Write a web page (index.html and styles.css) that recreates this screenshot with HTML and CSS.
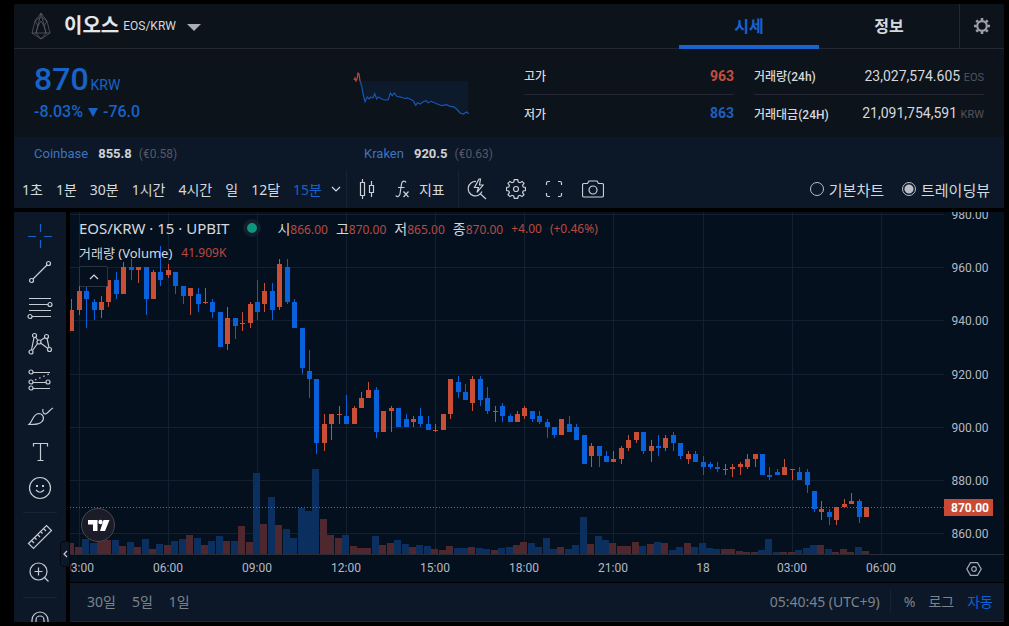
FILE: index.html
```html
<!DOCTYPE html>
<html lang="ko">
<head>
<meta charset="utf-8">
<meta name="viewport" content="width=device-width, initial-scale=1">
<title>이오스 EOS/KRW</title>
<link rel="stylesheet" href="styles.css">
</head>
<body>
<main class="app">
  <header class="header">
    <button class="coin" type="button">
      <svg class="coin-logo" width="20" height="28" viewBox="0 0 20 28"><path d="M10 1 4 9 1 21 10 27 19 21 16 9ZM10 1 5 21 10 27 15 21ZM4 9 10 5 16 9M1 21H19M4 9 7 14 5 21M16 9 13 14 15 21M7 14 10 9 13 14"/></svg>
      <strong class="coin-name">이오스</strong>
      <span class="coin-pair">EOS/KRW</span>
      <span class="caret"></span>
    </button>
    <nav class="tabs">
      <a class="tab tab-active" href="#price">시세</a>
      <a class="tab" href="#info">정보</a>
    </nav>
    <button class="header-settings" type="button" aria-label="설정">
      <svg width="18" height="18" viewBox="0 0 18 18"><circle cx="9" cy="9" r="4.8" fill="none" stroke="currentColor" stroke-width="2.2"/><path d="M9 1V3.5M9 14.500V17M1 9H3.500M14.500 9H17M3.300 3.300 5 5M13 13 14.700 14.700M14.700 3.300 13 5M5 13 3.300 14.700" stroke="currentColor" stroke-width="2.6"/></svg>
    </button>
  </header>

  <section class="summary">
    <div class="price">
      <div class="price-now"><strong>870</strong><span>KRW</span></div>
      <div class="price-change"><span>-8.03%</span><i class="down"></i><span>-76.0</span></div>
    </div>
    <svg class="spark" width="120" height="48" viewBox="0 0 120 48">
      <path class="spark-fill" d="M8 11 10 16 11 25 13 32 15 27 17 29 19 27 21 28 23 24 25 29 26 27 30 29 36 30 38 23 40 26 42 23 45 26 50 27 53 29 58 29 61 31 64 35 66 33 68 34 74 31 79 31 90 36 95 35 101 37 108 43 116 43V11Z"/>
      <path class="spark-up" d="M2 10 3 8 4 11 5 9 6 3 7 4 8 11"/>
      <path class="spark-down" d="M8 11 9.700 16 11.300 25 13 31.700 15.300 27 17.300 29 18.700 27 21 28 22.700 23.700 24.700 29 26.300 27 29.700 29 33 30 36.300 29.700 38.300 23 40.300 25.700 42.300 23 44.700 26.300 49.700 27.300 53 28.700 55 28 58 29 61.300 31 63.700 35.300 65.700 32.700 68 34 71.300 31.700 74 30.700 76.300 32.700 79 31.300 84.700 33.700 89.700 35.700 94.700 34.700 98.700 36.700 101.300 36.700 104.700 39 108 43 111.300 44 114.700 42 116.700 43.700"/>
    </svg>
    <dl class="stats stats-range">
      <div><dt>고가</dt><dd class="up">963</dd></div>
      <div><dt>저가</dt><dd class="fall">863</dd></div>
    </dl>
    <dl class="stats stats-volume">
      <div><dt>거래량(24h)</dt><dd>23,027,574.605 <small>EOS</small></dd></div>
      <div><dt>거래대금(24H)</dt><dd>21,091,754,591 <small>KRW</small></dd></div>
    </dl>
  </section>

  <section class="exchanges">
    <p><a href="#coinbase">Coinbase</a><strong>855.8</strong><span>(€0.58)</span></p>
    <p><a href="#kraken">Kraken</a><strong>920.5</strong><span>(€0.63)</span></p>
  </section>

  <section class="toolbar">
    <div class="intervals">
      <button type="button">1초</button>
      <button type="button">1분</button>
      <button type="button">30분</button>
      <button type="button">1시간</button>
      <button type="button">4시간</button>
      <button type="button">일</button>
      <button type="button">12달</button>
      <button type="button" class="on">15분</button>
    </div>
    <button type="button" class="more" aria-label="더 보기"><svg class="line" width="10" height="6" viewBox="0 0 10 6"><path d="M1 1 5 5 9 1"/></svg></button>
    <div class="tools tools-style">
      <button type="button" aria-label="캔들"><svg class="line" width="16" height="20" viewBox="0 0 16 20"><path d="M1.500 3.500H5.500V16.500H1.500ZM3.500 0V3.500M3.500 16.500V20M10.500 6.500H14.500V13.500H10.500ZM12.500 2V6.500M12.500 13.500V18"/></svg></button>
      <button type="button"><svg class="line" width="15" height="18" viewBox="0 0 15 18"><path d="M11 2.500C10 .5 7 .5 6.500 4L5 14C4.600 16.500 2 17.500 .8 15.500M3 7.500H9.500M8.500 11.500 13.500 17M13.500 11.500 8.500 17"/></svg>지표</button>
    </div>
    <div class="tools tools-view">
      <button type="button" aria-label="빠른 검색"><svg class="line" width="20" height="22" viewBox="0 0 20 22"><path d="M9 3.500A7.200 7.200 0 1 0 15 13.500M13 15.500 19 21M12 1 7.500 9.500H11.500L10 14.500 16 7H12.500L13.500 1Z"/></svg></button>
      <button type="button" aria-label="차트 설정"><svg class="line" width="20" height="20" viewBox="0 0 20 20"><circle cx="10" cy="10" r="2.500"/><path d="M8.300.6H11.700L12.300 3 14 3.700 16.100 2.400 18 4.300 16.600 6.300 17.200 8 19.500 8.500V11.500L17.200 12 16.600 13.700 18 15.700 16.100 17.600 14 16.300 12.300 17 11.700 19.400H8.300L7.700 17 6 16.300 3.900 17.600 2 15.700 3.400 13.700 2.800 12 .5 11.500V8.500L2.800 8 3.400 6.300 2 4.300 3.900 2.400 6 3.700 7.700 3Z"/></svg></button>
      <button type="button" aria-label="전체 화면"><svg class="line" width="18" height="18" viewBox="0 0 18 18"><path d="M1.500 5V3Q1.500 1.500 3 1.500H5M13 1.500H15Q16.500 1.500 16.500 3V5M16.500 13V15Q16.500 16.500 15 16.500H13M5 16.500H3Q1.500 16.500 1.500 15V13"/></svg></button>
      <button type="button" aria-label="스냅숏"><svg class="line" width="22" height="18" viewBox="0 0 22 18"><path d="M7 1H15L16.500 3.500H20Q21.500 3.500 21.500 5V15.500Q21.500 17 20 17H2Q.5 17 .5 15.500V5Q.5 3.500 2 3.500H5.500Z"/><circle cx="11" cy="10" r="4"/></svg></button>
    </div>
    <div class="chart-kind">
      <label><input type="radio" name="kind">기본차트</label>
      <label><input type="radio" name="kind" checked>트레이딩뷰</label>
    </div>
  </section>

  <section class="workspace">
    <aside class="rail">
      <button type="button" class="on" aria-label="십자선"><svg class="line" width="28" height="28" viewBox="0 0 28 28"><path d="M14.500 2V10M14.500 18V26M2 14.500H10M18 14.500H26"/></svg></button>
      <button type="button" aria-label="추세선"><svg class="line" width="28" height="28" viewBox="0 0 28 28"><circle cx="5.500" cy="22.500" r="2"/><circle cx="22.500" cy="5.500" r="2"/><path d="M7 21 21 7"/></svg></button>
      <button type="button" aria-label="피보나치"><svg class="line" width="28" height="28" viewBox="0 0 28 28"><path d="M3 4.500H25M3 10.500H22M3 16.500H25M6 22.500H25"/><circle cx="24" cy="10.500" r="2"/><circle cx="4" cy="22.500" r="2"/></svg></button>
      <button type="button" aria-label="패턴"><svg class="line" width="28" height="28" viewBox="0 0 28 28"><circle cx="8.500" cy="5.500" r="2"/><circle cx="20.500" cy="6.500" r="2"/><circle cx="5" cy="22" r="2"/><circle cx="23.500" cy="19.500" r="2"/><circle cx="13" cy="12" r="2"/><path d="M8 7.500 5.500 20M9.500 7 12 10.500M14.500 10.500 19 7.500M21 8.500 23 17.500M11.500 13.500 6.500 20.500M14.500 13 22 18.500"/></svg></button>
      <button type="button" aria-label="예측"><svg class="line" width="28" height="28" viewBox="0 0 28 28"><circle cx="5" cy="6" r="2"/><circle cx="5" cy="16" r="2"/><circle cx="5" cy="22" r="2"/><circle cx="22" cy="16" r="2"/><path d="M7 6.500H24M7 16.500H20M7 22.500H24"/><path d="M9 14 23 8" stroke-dasharray="1.500 3"/></svg></button>
      <button type="button" aria-label="브러시"><svg class="line" width="28" height="28" viewBox="0 0 28 28"><path d="M3 22.500C7 19 7 12 12.500 11.500C17 11.500 19 16 16 19.500C14 22.500 9 22.500 3 22.500ZM17 7C16 10 18 13 20.500 11.500C23 10 24 7.500 27 6"/></svg></button>
      <button type="button" aria-label="텍스트"><svg class="line" width="28" height="28" viewBox="0 0 28 28"><path d="M7.500 8.500V5.500H21.500V8.500M14.500 5.500V22.500M11.500 22.500H17.500"/></svg></button>
      <button type="button" aria-label="아이콘"><svg class="line" width="28" height="28" viewBox="0 0 28 28"><circle cx="14" cy="14" r="10.500"/><path d="M10 16Q14 20.500 18 16"/><path d="M11 11V13M17 11V13" stroke-width="2"/></svg></button>
      <hr>
      <button type="button" aria-label="측정"><svg class="line" width="28" height="28" viewBox="0 0 28 28"><path d="M2.500 20.500 20.500 2.500 25.500 7.500 7.500 25.500ZM5.500 17.500 8 20M8.500 14.500 10.500 16.500M11.500 11.500 14 14M14.500 8.500 16.500 10.500M17.500 5.500 20 8"/></svg></button>
      <button type="button" aria-label="확대"><svg class="line" width="28" height="28" viewBox="0 0 28 28"><circle cx="12.500" cy="12.500" r="8.500"/><path d="M18.500 18.500 22.500 22.500M8.500 12.500H16.500M12.500 8.500V16.500"/></svg></button>
      <hr>
      <button type="button" aria-label="자석"><svg class="line" width="28" height="28" viewBox="0 0 28 28"><path d="M6 19V12A8 8 0 0 1 22 12V19H18V12A4 4 0 0 0 10 12V19Z"/></svg></button>
      <button type="button" class="collapse" aria-label="도구 접기"><svg class="line" width="5" height="8" viewBox="0 0 5 8"><path d="M4 1 1 4 4 7"/></svg></button>
    </aside>

    <div class="chart">
      <div class="plot">
        <svg id="plot" class="canvas"></svg>
        <div class="legend">
          <div class="legend-row">
            <span class="symbol">EOS/KRW · 15 · UPBIT</span>
            <span class="status"></span>
            <div class="ohlc">
              <span>시<b>866.00</b></span>
              <span>고<b>870.00</b></span>
              <span>저<b>865.00</b></span>
              <span>종<b>870.00</b></span>
              <b>+4.00</b>
              <b>(+0.46%)</b>
            </div>
          </div>
          <div class="legend-row legend-volume"><span>거래량 (Volume)</span><b>41.909K</b></div>
          <button type="button" aria-label="범례 접기"><svg class="line" width="10" height="6" viewBox="0 0 10 6"><path d="M1 5 5 1 9 5"/></svg></button>
        </div>
        <svg class="tv" width="36" height="36" viewBox="0 0 36 36"><circle cx="18" cy="18" r="16.500" fill="#1b1c28" stroke="#454752"/><path d="M8 13H17.500V24H13V17.500H8ZM23.500 13H29.500L25 24H20Z" fill="#fff"/><circle cx="20.500" cy="15" r="2.200" fill="#fff"/></svg>
      </div>
      <div class="price-axis"><svg id="prices" class="canvas"></svg></div>
      <div class="time-axis"><svg id="times" class="canvas"></svg></div>
      <button class="axis-settings" type="button" aria-label="축 설정"><svg class="line" width="16" height="14" viewBox="0 0 16 14"><path d="M4.500.7H11.500L15.200 7 11.500 13.300H4.500L.8 7Z"/><circle cx="8" cy="7" r="2.300"/></svg></button>
      <footer class="footer">
        <div class="ranges">
          <button type="button">30일</button>
          <button type="button">5일</button>
          <button type="button">1일</button>
        </div>
        <div class="scale">
          <button type="button" class="clock">05:40:45 (UTC+9)</button>
          <button type="button">%</button>
          <button type="button">로그</button>
          <button type="button" class="on">자동</button>
        </div>
      </footer>
    </div>
  </section>
</main>
<script src="chart.js"></script>
</body>
</html>
```
FILE: styles.css
```css
* { box-sizing: border-box; }

body {
  margin: 0;
  height: 100vh;
  min-height: 600px;
  padding: 4px 5px 4px 14px;
  background: #000;
  color: #d5d8dd;
  font-family: Roboto, "Noto Sans CJK KR", sans-serif;
  overflow: hidden;
}

button {
  display: flex;
  align-items: center;
  justify-content: center;
  margin: 0;
  padding: 0;
  border: 0;
  background: none;
  color: inherit;
  font: inherit;
  white-space: nowrap;
}

a { color: inherit; text-decoration: none; }
p, dl, dd { margin: 0; }
svg { display: block; flex: none; }
.line { fill: none; stroke: currentColor; stroke-width: 1.2; }

.app { display: flex; flex-direction: column; height: 100%; }

/* Header */
.header {
  display: flex;
  height: 45px;
  flex: none;
  background: #0d131a;
  border-bottom: 1px solid #242733;
  border-radius: 2px 2px 0 0;
}
.coin { padding-left: 17px; margin-right: auto; }
.coin-logo { fill: none; stroke: #62636b; stroke-width: 0.7; margin-right: 13px; }
.coin-name { font-size: 20px; line-height: 28px; color: #e4e6e9; }
.coin-pair { font-size: 12px; margin-left: 4px; }
.caret { margin: 2px 0 0 11px; border: 7px solid transparent; border-top-color: #a9adb5; border-bottom: 0; }
.tabs { display: flex; }
.tab {
  width: 140px;
  height: 45px;
  font-size: 16px;
  font-weight: 700;
  line-height: 45px;
  text-align: center;
}
.tab-active { color: #1763d0; border-bottom: 4px solid #1763d0; }
.header-settings { width: 45px; border-left: 1px solid #242733; color: #9da1aa; }

/* Price summary */
.summary {
  display: flex;
  flex: none;
  height: 88px;
  padding: 8px 20px 0;
  background: #0d131a;
}
.price { flex: 1; padding-top: 6px; color: #1763c8; }
.price-now { display: flex; align-items: baseline; gap: 2px; font-size: 14px; line-height: 32px; }
.price-now strong { font-size: 32px; font-weight: 500; }
.price-change { display: flex; align-items: center; gap: 5px; font-size: 16px; font-weight: 500; line-height: 22px; }
.down { border: 5px solid transparent; border-top: 9px solid #1763c8; border-bottom: 0; }
.spark { margin: 13px 52px 0 0; fill: none; stroke-width: 1.2; }
.spark-fill { fill: #0c1a2c; }
.spark-up { stroke: #c0483c; }
.spark-down { stroke: #1656b4; }
.stats { font-size: 14px; }
.stats-range { width: 210px; margin-right: 20px; }
.stats-volume { width: 230px; }
.stats div { display: flex; justify-content: space-between; align-items: center; height: 37px; }
.stats div + div { border-top: 1px solid #242733; }
.stats dt { font-size: 12px; font-weight: 500; }
.stats small { font-size: 11px; color: #50545e; }
.up, .fall { font-weight: 700; }
.up { color: #c0503f; }
.fall { color: #1c5fbe; }

/* Other exchanges */
.exchanges {
  display: grid;
  grid-template-columns: 330px 1fr;
  flex: none;
  height: 31px;
  padding-left: 20px;
  background: #0c1727;
  font-size: 13px;
  line-height: 33px;
}
.exchanges a { color: #3d74bf; }
.exchanges strong { margin: 0 7px 0 10px; color: #cfd2d7; }
.exchanges span { font-size: 12px; color: #545a65; }

/* Chart toolbar */
.toolbar, .rail, .footer { font-family: "Noto Sans", "Noto Sans CJK KR", sans-serif; background: #0c1828; }
.toolbar {
  display: flex;
  flex: none;
  height: 40px;
  padding-top: 2px;
  font-size: 14px;
}
.on { color: #1763c8; }
.intervals { display: flex; gap: 13px; padding-left: 8px; }
.more { padding: 0 5px 0 9px; }
.tools { display: flex; border-left: 1px solid #172233; }
.tools svg { color: #cbd0d7; }
.tools-style { gap: 20px; width: 112px; padding-left: 12px; }
.tools-style button { gap: 9px; }
.tools-view { gap: 19px; padding-left: 8px; }
.chart-kind { display: flex; gap: 18px; margin-left: auto; padding-right: 14px; font-size: 15px; }
.chart-kind label { display: flex; align-items: center; gap: 5px; white-space: nowrap; }
.chart-kind input {
  appearance: none;
  width: 14px;
  height: 14px;
  margin: 0;
  border: 1px solid #b9bec7;
  border-radius: 50%;
}
.chart-kind input:checked { background: radial-gradient(#b9bec7 0 4px, transparent 5px); }

/* Workspace */
.workspace { display: flex; flex: 1; min-height: 0; margin-top: 4px; gap: 4px; }
.rail { position: relative; width: 52px; padding-top: 6px; color: #c5cbd3; }
.rail { display: flex; flex-direction: column; min-height: 0; clip-path: inset(0 -6px 0 0); }
.rail button { flex: none; height: 36px; }
.rail button.on { color: #1763c8; }
.rail hr { flex: none; width: 34px; margin: 6px auto; border: 0; border-top: 1px solid #182434; }
.rail .collapse {
  position: absolute;
  right: -4px;
  bottom: 55px;
  width: 10px;
  height: 26px;
  background: #0c1828;
  border: 1px solid #03080f;
  border-radius: 4px 0 0 4px;
}

.chart {
  display: grid;
  grid-template: minmax(0, 1fr) 28px 40px / minmax(0, 1fr) 60px;
  flex: 1;
  min-width: 0;
  background: #05101f;
}
.canvas { width: 100%; height: 100%; }
.canvas text { font: 12px Roboto, sans-serif; fill: #b4b9c1; text-anchor: middle; }
.canvas .grid { stroke: #14202f; }
.canvas .last { stroke: #a35648; stroke-dasharray: 1 2; }
.canvas .rise { fill: #c84f36; }
.canvas .drop { fill: #0962dc; }
.canvas .vol-rise { fill: #4f272e; }
.canvas .vol-drop { fill: #0b2f5e; }
.canvas .tag { fill: #c84a34; }
.canvas .tag-text { fill: #fff; font-weight: 700; }
.plot { position: relative; min-width: 0; overflow: hidden; }
.price-axis { overflow: hidden; }
.time-axis, .axis-settings { border-top: 1px solid #262d37; }
.time-axis { overflow: hidden; }
.axis-settings { color: #a5abb4; }

.legend {
  position: absolute;
  top: 4px;
  left: 9px;
  font-family: "Noto Sans", "Noto Sans CJK KR", sans-serif;
  font-size: 14px;
}
.legend-row { display: flex; align-items: center; height: 24px; white-space: nowrap; }
.legend b { font-size: 12px; font-weight: 400; color: #b84a40; }
.symbol { font-size: 15px; }
.status { width: 18px; height: 18px; margin: 0 16px 0 14px; border: 4px solid #101e2d; border-radius: 50%; background: #0d957e; }
.ohlc { display: flex; align-items: center; gap: 8px; }
.legend-volume { gap: 9px; font-size: 13px; }
.legend button { width: 29px; height: 21px; margin-top: 2px; border: 1px solid #2b3340; border-radius: 2px; background: #05101f; }
.tv { position: absolute; left: 10px; bottom: 11px; }

.footer {
  display: flex;
  justify-content: space-between;
  grid-column: 1 / -1;
  padding: 0 11px 2px 17px;
  border-top: 1px solid #000;
  border-bottom: 1px solid #20242b;
  font-size: 14px;
  color: #7c838e;
}
.ranges { display: flex; gap: 16px; }
.scale { display: flex; align-items: center; gap: 13px; }
.scale .clock { height: 22px; padding-right: 10px; border-right: 1px solid #172233; }
.footer .on { color: #0b62dc; }
```
FILE: chart.js
```js
// Each candle: direction, high, body top, body bottom, low, volume bar height.
const candles = `
r 948 944 936 936 11|r 953 951 944 942 7|b 953 951 948 937 15|b 948 947 944 940 11|r 949 947 944 941 13|r 955 955 947 945 14
b 958 955 950 948 14|r 962 960 950 950 8|b 963 960 959 955 12|r 960 960 959 954 7|b 960 960 948 942 15|r 959 958 948 948 5
b 968 958 955 953 10|r 961 959 957 956 9|b 958 958 953 950 13|b 953 953 949 946 15|r 952 952 949 942 19|b 952 950 946 943 16
r 952 947 947 946 9|b 948 947 943 941 13|b 943 943 930 930 18|r 945 941 931 929 13|b 941 941 938 933 13|r 943 939 939 936 28
r 947 946 939 937 12|b 955 947 943 940 81|r 954 951 946 943 30|b 954 951 944 940 57|r 963 961 945 944 29|b 963 960 947 946 25
b 948 947 937 937 16|b 937 937 922 920 46|b 929 921 918 911 43|b 918 918 894 890 85|r 905 901 894 891 35|r 905 905 901 895 19
r 908 905 905 901 16|b 912 904 901 901 19|r 908 907 901 901 8|r 913 911 907 907 6|r 917 914 911 911 6|b 915 914 898 896 18
r 906 906 898 898 9|r 908 907 906 898 11|b 907 907 900 900 14|b 905 903 900 900 10|r 904 903 902 900 7|b 907 904 901 900 9
b 904 901 899 899 8|r 901 899 899 898 5|r 905 905 899 899 4|r 918 918 905 903 8|b 919 917 913 911 6|b 916 913 910 910 6
r 919 918 909 906 7|b 919 918 910 908 6|b 915 911 906 905 5|r 908 906 906 902 4|b 909 908 904 902 6|b 905 904 902 902 7
r 906 905 902 902 9|r 908 907 904 903 12|b 906 906 903 902 11|b 906 904 902 901 7|b 903 902 900 896 16|b 900 900 897 896 5
r 903 903 897 897 7|b 904 901 898 898 5|b 901 900 895 895 9|b 897 897 886 886 37|r 894 893 889 885 10|b 893 893 889 885 18
b 891 889 887 887 14|r 891 888 887 887 11|r 893 892 888 886 8|r 897 895 892 891 8|r 898 898 895 894 12|b 898 898 891 890 8
r 895 893 891 887 10|b 897 893 892 889 12|r 897 896 892 891 11|b 898 897 894 891 4|b 894 894 889 888 7|r 891 890 888 886 11
b 891 890 887 887 7|b 889 887 885 882 11|b 887 886 885 884 6|b 887 885 884 883 5|r 886 884 884 882 5|r 886 885 884 881 5
r 887 886 885 882 3|r 890 888 885 884 2|r 890 890 888 885 2|b 890 890 882 882 4|b 885 882 881 880 15|b 884 883 882 882 2
r 888 885 882 882 2|r 884 884 884 880 2|b 885 883 880 880 4|b 884 883 878 875 6|b 876 876 869 868 9|r 872 869 868 865 9
b 869 868 866 863 5|r 870 870 865 863 2|r 873 871 870 870 5|r 875 872 871 871 2|b 873 872 866 864 7|r 870 870 866 866 3`
  .trim().split(/[|\n]/).map(row => row.split(" "));

const labels = ["03:00", "06:00", "09:00", "12:00", "15:00", "18:00", "21:00", "18", "03:00", "06:00"];
const plot = document.getElementById("plot");
const prices = document.getElementById("prices");
const times = document.getElementById("times");

function rect(cls, x, y, w, h) {
  return `<rect class="${cls}" x="${x}" y="${y}" width="${w}" height="${h}"/>`;
}

function draw() {
  const width = plot.clientWidth;
  const height = plot.clientHeight;
  const step = 7.427;
  const x = i => Math.round(width - 78 - (106 - i) * step);
  const y = p => Math.round((980.6 - p) * height / 128.3);
  let grid = "", volume = "", bodies = "", priceText = "", timeText = "";

  for (let p = 980; p >= 860; p -= 20) {
    grid += `<path class="grid" d="M0 ${y(p) + 0.5}H${width}"/>`;
    priceText += `<text x="26" y="${y(p) + 5}">${p}.00</text>`;
  }
  labels.forEach((label, n) => {
    grid += `<path class="grid" d="M${x(n * 12) + 0.5} 0V${height}"/>`;
    timeText += `<text x="${x(n * 12)}" y="17">${label}</text>`;
  });
  candles.forEach(([side, high, top, bottom, low, vol], n) => {
    const cx = x(n - 1);
    const cls = side === "r" ? "rise" : "drop";
    volume += rect("vol-" + cls, cx - 4, height - vol, 7, vol);
    bodies += rect(cls, cx, y(high), 1, Math.max(1, y(low) - y(high)));
    bodies += rect(cls, cx - 2, y(top), 5, Math.max(1, y(bottom) - y(top)));
  });
  const last = y(870);
  plot.innerHTML = grid + volume + `<path class="last" d="M0 ${last + 0.5}H${width}"/>` + bodies;
  prices.innerHTML = priceText + rect("tag", 0, last - 8, 49, 17) + `<text class="tag-text" x="26" y="${last + 5}">870.00</text>`;
  times.innerHTML = timeText;
}

draw();
window.addEventListener("resize", draw);
```
